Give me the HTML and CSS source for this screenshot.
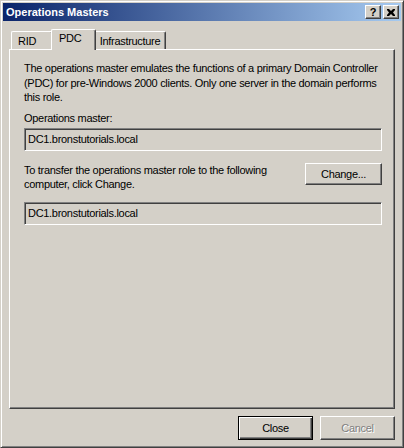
FILE: index.html
```html
<!DOCTYPE html>
<html>
<head>
<meta charset="utf-8">
<link rel="stylesheet" href="styles.css">
</head>
<body>
<div class="window">
  <div class="titlebar">
    <span class="title">Operations Masters</span>
    <div class="caption-btns">
      <span class="cap-btn">?</span>
      <span class="cap-btn cap-x"><svg width="8" height="7" viewBox="0 0 8 7"><path d="M0 0h2l2 2 2-2h2v1L6 3.5 8 6v1H6L4 5 2 7H0V6l2-2.5L0 1z" fill="#000"/></svg></span>
    </div>
  </div>
  <div class="content">
    <div class="tabs">
      <div class="tab tab-rid">RID</div>
      <div class="tab tab-sel">PDC</div>
      <div class="tab tab-infra">Infrastructure</div>
    </div>
    <div class="panel">
      <p class="desc">The operations master emulates the functions of a primary Domain Controller<br>(PDC) for pre-Windows 2000 clients. Only one server in the domain performs<br>this role.</p>
      <div class="label">Operations master:</div>
      <div class="field">DC1.bronstutorials.local</div>
      <div class="transfer">
        <div class="transfer-text">To transfer the operations master role to the following<br>computer, click Change.</div>
        <div class="btn btn-change">Change...</div>
      </div>
      <div class="field field2">DC1.bronstutorials.local</div>
    </div>
    <div class="footer">
      <div class="btn btn-default">Close</div>
      <div class="btn btn-disabled">Cancel</div>
    </div>
  </div>
</div>
</body>
</html>
```
FILE: styles.css
```css
html, body {
  margin: 0;
  padding: 0;
  background: #d4d0c8;
}
.window {
  width: 404px;
  height: 448px;
  box-sizing: border-box;
  background: #d4d0c8;
  border: 1px solid;
  border-color: #d4d0c8 #404040 #404040 #d4d0c8;
  box-shadow: inset 1px 1px #ffffff, inset -1px -1px #808080;
  padding: 2px;
  display: flex;
  flex-direction: column;
  font-family: "Liberation Sans", Arial, sans-serif;
  font-size: 11px;
  letter-spacing: -0.3px;
  color: #000;
  white-space: nowrap;
}
.titlebar {
  height: 18px;
  background: linear-gradient(to right, #0a246a, #a6caf0);
  display: flex;
  align-items: center;
  justify-content: space-between;
  padding: 0 2px 0 3px;
}
.title {
  color: #fff;
  font-weight: bold;
  font-size: 11px;
  letter-spacing: 0;
}
.caption-btns {
  display: flex;
  gap: 2px;
}
.cap-btn {
  width: 16px;
  height: 14px;
  box-sizing: border-box;
  background: #d4d0c8;
  border: 1px solid;
  border-color: #ffffff #404040 #404040 #ffffff;
  box-shadow: inset -1px -1px #808080;
  display: flex;
  align-items: center;
  justify-content: center;
  font-weight: bold;
  font-size: 11px;
  line-height: 1;
  letter-spacing: 0;
}
.content {
  flex: 1;
  display: flex;
  flex-direction: column;
  padding: 8px 6px 0 6px;
}
.tabs {
  display: flex;
  align-items: flex-end;
  height: 21px;
  margin-bottom: -1px;
  padding-left: 2px;
}
.tab {
  box-sizing: border-box;
  height: 18px;
  margin-bottom: 1px;
  background: #d4d0c8;
  border-top: 1px solid #fff;
  border-left: 1px solid #fff;
  border-right: 1px solid #404040;
  box-shadow: inset -1px 0 #808080;
  border-radius: 2px 2px 0 0;
  display: flex;
  align-items: center;
  justify-content: center;
  padding-top: 1px;
}
.tab-rid {
  width: 42px;
  justify-content: flex-start;
  padding-left: 6px;
}
.tab-sel {
  width: 45px;
  height: 21px;
  margin: 0 -2px 0 -2px;
  position: relative;
  z-index: 1;
  align-items: flex-start;
  justify-content: flex-start;
  padding-top: 2px;
  padding-left: 7px;
}
.tab-infra { width: 72px; }
.panel {
  height: 360px;
  box-sizing: border-box;
  border: 1px solid;
  border-color: #fff #404040 #404040 #fff;
  box-shadow: inset -1px -1px #808080;
  padding: 11px 12px 0 14px;
  display: flex;
  flex-direction: column;
}
.desc {
  margin: 0;
  line-height: 14.5px;
}
.label {
  margin-top: 6px;
  line-height: 14px;
}
.field {
  margin-top: 3px;
  height: 23px;
  box-sizing: border-box;
  border: 1px solid;
  border-color: #808080 #fff #fff #808080;
  box-shadow: inset 1px 1px #404040, inset -1px -1px #d4d0c8;
  padding: 0 3px;
  display: flex;
  align-items: center;
  background: #d4d0c8;
}
.transfer {
  margin-top: 12px;
  display: flex;
  justify-content: space-between;
  align-items: flex-start;
}
.transfer-text {
  line-height: 14px;
}
.btn {
  box-sizing: border-box;
  height: 23px;
  display: flex;
  align-items: center;
  justify-content: center;
  background: #d4d0c8;
  border: 1px solid;
  border-color: #fff #404040 #404040 #fff;
  box-shadow: inset -1px -1px #808080;
}
.btn-change {
  width: 77px;
  height: 22px;
}
.field2 {
  margin-top: 11px;
}
.footer {
  display: flex;
  justify-content: flex-end;
  gap: 7px;
  padding: 7px 0 0 0;
}
.btn-default {
  width: 75px;
  height: 24px;
  border: 1px solid #000;
  box-shadow: inset 1px 1px #fff, inset -1px -1px #404040, inset -2px -2px #808080;
}
.btn-disabled {
  width: 75px;
  height: 24px;
  color: #808080;
  text-shadow: 1px 1px #fff;
}
```
